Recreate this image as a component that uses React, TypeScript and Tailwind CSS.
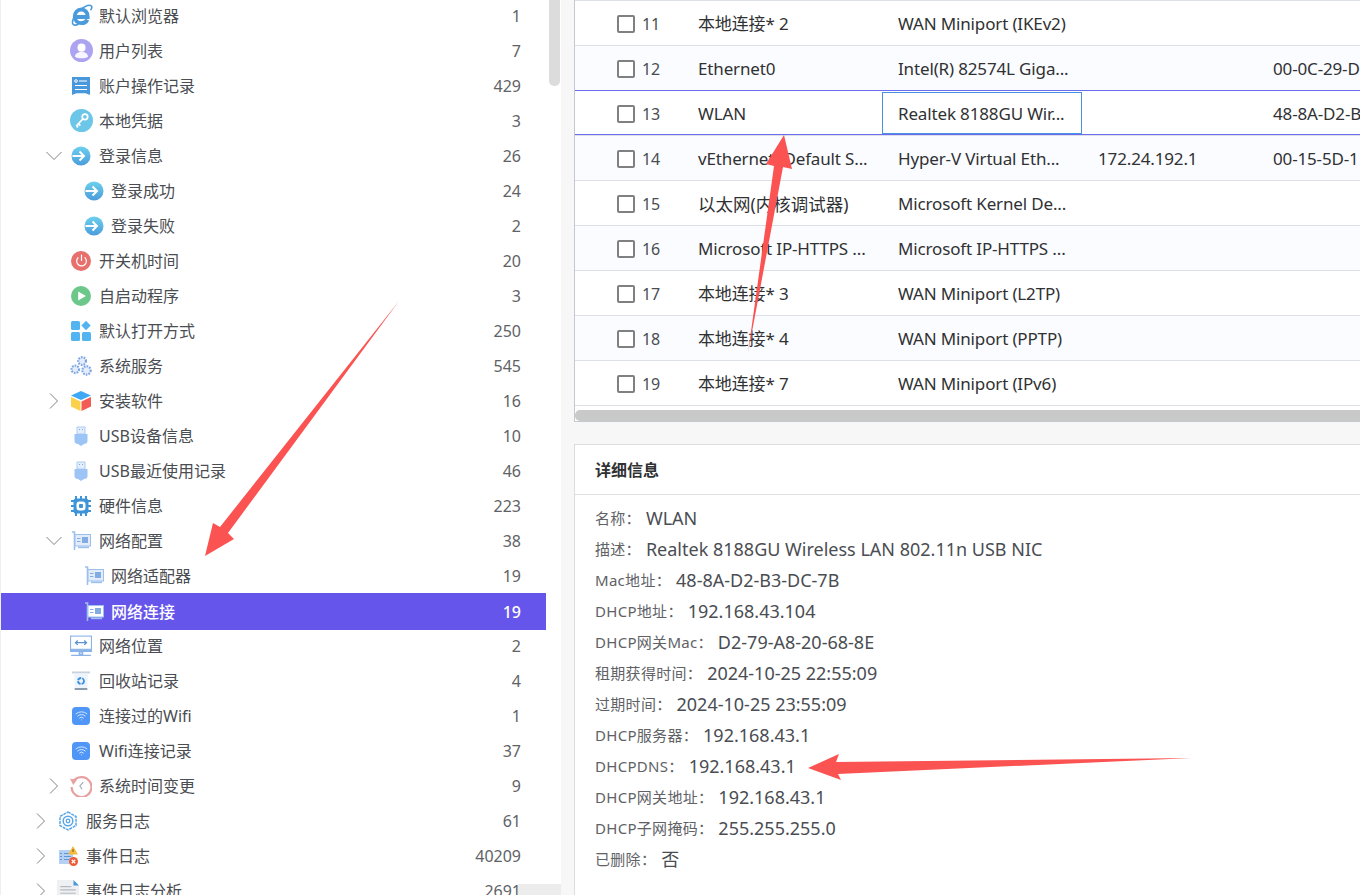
import { ReactNode } from "react";
import { Power, Wifi } from "lucide-react";

const font = { fontFamily: '"Noto Sans", "Noto Sans CJK SC", sans-serif' };

// icons, drawn on a 20x20 box unless a size is passed
const Svg = ({ children, size = 20 }: { children: ReactNode; size?: number }) => (
  <svg className="shrink-0" width={size} height={size} viewBox="0 0 20 20" fill="none">
    {children}
  </svg>
);

const IeIcon = () => (
  <Svg size={24}>
    <path d="M5 10.800h10.600c.2-3.600-2.200-6.200-5.300-6.200-3.200 0-5.500 2.500-5.500 5.800 0 3.300 2.400 5.600 5.500 5.600 2.400 0 4.200-1.200 5-3" stroke="#4a9bdc" strokeWidth="3.200" />
    <path d="M3.500 17c-2-2 1.500-9 5.500-12 4-3 8-4.500 9.500-3.500 1 .8.300 2.500-.5 3.700M3.500 17c1 1 3 .5 4.500-.3" stroke="#4a9bdc" strokeWidth="1.300" />
  </Svg>
);
const UserIcon = () => (
  <Svg size={23}>
    <circle cx="10" cy="10" r="10" fill="#aca3f1" />
    <circle cx="10" cy="7.500" r="3.500" fill="#fff" />
    <path d="M4.300 15.500c0-2.800 2.500-4.200 5.700-4.200s5.700 1.400 5.700 4.200c-1.500 1-3.600 1.300-5.700 1.300s-4.200-.3-5.700-1.300z" fill="#fff" fillOpacity=".9" />
  </Svg>
);
const RecordIcon = () => (
  <Svg>
    <path d="M1 1h18v18l-4.500-1.800H5.500L1 19z" fill="#4a98dc" />
    <circle cx="5" cy="5" r="1.300" stroke="#fff" />
    <path d="M8 5h8M4 9.500h12M4 13.500h12" stroke="#fff" strokeWidth="1.200" />
  </Svg>
);
const KeyIcon = () => (
  <Svg size={23}>
    <circle cx="10" cy="10" r="10" fill="#6cc6e8" />
    <circle cx="13" cy="6.800" r="2.400" stroke="#fff" strokeWidth="1.500" />
    <path d="M11.300 8.500 5.500 14.800M7.300 12.800l1.700 1.700M5.700 14.600l1.300 1.300" stroke="#fff" strokeWidth="1.500" />
  </Svg>
);
const LoginIcon = ({ id }: { id: string }) => (
  <Svg>
    <defs>
      <linearGradient id={id} x1="0" y1="0" x2="0" y2="1">
        <stop offset="0" stopColor="#6dd0ee" />
        <stop offset="1" stopColor="#4b9cdb" />
      </linearGradient>
    </defs>
    <circle cx="10" cy="10" r="9.500" fill={`url(#${id})`} />
    <path d="M1.500 10h11M8.500 5.500 13 10l-4.500 4.500" stroke="#fff" strokeWidth="2" />
  </Svg>
);
const PowerIcon = () => (
  <span className="flex h-5 w-5 items-center justify-center rounded-full bg-[#e8706c]">
    <Power size={13} color="#fff" strokeWidth={2.200} />
  </span>
);
const PlayIcon = () => (
  <Svg>
    <circle cx="10" cy="10" r="10" fill="#6cc88a" />
    <path d="M7.200 5.500 15 10l-7.800 4.500z" fill="#fff" />
  </Svg>
);
const AppsIcon = () => (
  <Svg>
    <rect x="0" y="0" width="9" height="9" rx="1.500" fill="#52b4f0" />
    <rect x="0" y="11" width="9" height="9" rx="1.500" fill="#52b4f0" />
    <rect x="11" y="11" width="9" height="9" rx="1.500" fill="#52b4f0" />
    <path d="m15 -.2 4.700 4.700-4.700 4.700-4.700-4.700z" fill="#52b4f0" />
  </Svg>
);
const GearsIcon = () => (
  <Svg size={22}>
    <g stroke="#7da5e4" fill="#e4edfb">
      <circle cx="11" cy="5.500" r="3.500" strokeWidth="2" strokeDasharray="1.500 1" />
      <circle cx="4.800" cy="13" r="3.400" strokeWidth="2" strokeDasharray="1.500 1" />
      <circle cx="15" cy="14" r="3.800" strokeWidth="2" strokeDasharray="1.500 1" />
    </g>
  </Svg>
);
const CubeIcon = () => (
  <Svg>
    <path d="M10 0 20 4.500 10 9 0 4.500z" fill="#3fa9f5" />
    <path d="M0 6v9.500L9.500 20V10.500z" fill="#fbd14b" />
    <path d="M20 6v9.500L10.500 20V10.500z" fill="#f25c54" />
  </Svg>
);
const UsbIcon = () => (
  <Svg>
    <path d="M6 1h8v7H6z" fill="#e4eefb" stroke="#a9cbf5" />
    <path d="M8 3.500h1M11 3.500h1" stroke="#7fa9de" strokeWidth="1.200" />
    <path d="M3.500 8h13v7c0 1.800-1.500 3-3.500 3l-3 2-3-2c-2 0-3.500-1.200-3.500-3z" fill="#9cc4f5" />
  </Svg>
);
const ChipIcon = () => (
  <Svg>
    <path d="M5 0v20M10 0v20M15 0v20M0 5h20M0 10h20M0 15h20" stroke="#3f94d8" strokeWidth="2" />
    <rect x="2.500" y="2.500" width="15" height="15" rx="2.500" fill="#3f94d8" />
    <rect x="5.500" y="5.500" width="9" height="9" rx="3" fill="#fff" />
    <rect x="8" y="8" width="4" height="4" rx="1" fill="#3f94d8" />
  </Svg>
);
const NicIcon = ({ light }: { light?: boolean }) => (
  <Svg>
    <path d="M1 1h2.500v18" stroke="#9cc0ec" strokeWidth="1.600" />
    <rect x="4" y="3.500" width="15.500" height="11.500" fill={light ? "#fff" : "#e2ecfb"} stroke="#9cc0ec" />
    <rect x="11" y="6" width="6" height="6" fill="#82ace2" />
    <path d="M6 7.500h3.500M6 10.500h3.500" stroke="#82ace2" />
    <path d="M7 15.500h11v1.700H7z" fill="#9cc0ec" />
  </Svg>
);
const MonitorIcon = () => (
  <Svg size={22}>
    <rect x="0.500" y="1" width="19" height="12" fill="#fff" stroke="#8ab4e8" />
    <rect x="0" y="13" width="20" height="2.500" fill="#8ab4e8" />
    <path d="M5 7h10M7 5 5 7l2 2M13 5l2 2-2 2" stroke="#5b93d8" strokeWidth="1.200" />
    <path d="M8.500 15.500h3v2h-3zM1 18.500h18" stroke="#8ab4e8" strokeWidth="1.200" />
  </Svg>
);
const BinIcon = () => (
  <Svg>
    <path d="M1 .5h18v2H1z" fill="#c9d2dc" />
    <path d="M3 2.500h14l-.8 15H3.800z" fill="#eef4fb" />
    <path d="M3.700 17h12.600v2H3.700z" fill="#8c9bab" />
    <circle cx="10" cy="10" r="3" stroke="#3d8fe0" strokeWidth="1.800" strokeDasharray="4 1" />
  </Svg>
);
const WifiIcon = () => (
  <span className="flex h-[18px] w-[18px] items-center justify-center rounded-[4px] bg-[#5096f7]">
    <Wifi size={13} color="#d8e8ff" strokeWidth={1.800} />
  </span>
);
const HistoryIcon = () => (
  <Svg size={22}>
    <path d="M3 6a9 9 0 1 1-1.500 5" stroke="#e8a0a0" strokeWidth="2" />
    <path d="M0 3.500 6.500 4 3 9z" fill="#e8a0a0" />
    <path d="M12 6.500 9 10l2 3" stroke="#9aa6b8" strokeWidth="1" />
  </Svg>
);
const ServiceIcon = () => (
  <Svg>
    <path d="M10 1 18 5.500v9L10 19 2 14.500v-9z" stroke="#5aa5e6" strokeWidth="1.500" strokeDasharray="3 .8" />
    <circle cx="10" cy="10" r="4.800" stroke="#5aa5e6" strokeWidth="1.500" />
    <circle cx="10" cy="10" r="1.800" stroke="#5aa5e6" strokeWidth="1.300" />
  </Svg>
);
const EventIcon = () => (
  <Svg>
    <rect x="1" y="4" width="14" height="14" fill="#b4d0f2" />
    <path d="M2 7.500h2M6 7.500h7M2 10.500h2M6 10.500h7M2 13.500h2M6 13.500h5" stroke="#5d95d8" />
    <path d="m15 0 5 8.500H10z" fill="#f5bb3c" />
    <path d="M15 3v3" stroke="#7a5a10" />
    <circle cx="15.500" cy="15.500" r="4.500" fill="#ee5a35" />
    <path d="m13.800 13.800 3.400 3.400m0-3.400-3.400 3.400" stroke="#fff" strokeWidth="1.300" />
  </Svg>
);
const DocIcon = () => (
  <Svg size={22}>
    <path d="M0 0h15l5 5v15H0z" fill="#eef0f2" />
    <path d="M15 0l5 5h-5z" fill="#4a98dc" />
    <path d="M3 6h10M3 9h14M3 12h14" stroke="#b4bac2" />
    <circle cx="11" cy="19" r="5" fill="#4a98dc" />
  </Svg>
);

const ArrowOpen = () => (
  <svg width="16" height="10" viewBox="0 0 16 10" fill="none">
    <path d="M.5 1 8 8.500 15.500 1" stroke="#808285" />
  </svg>
);
const ArrowClosed = () => (
  <svg width="10" height="16" viewBox="0 0 10 16" fill="none">
    <path d="M1 .5 8.500 8 1 15.500" stroke="#808285" />
  </svg>
);

type TreeRow = {
  label: string;
  count: number;
  depth: 1 | 2 | 3;
  icon: ReactNode;
  arrow?: "open" | "closed";
  active?: boolean;
};

const treeRows: TreeRow[] = [
  { label: "默认浏览器", count: 1, depth: 2, icon: <IeIcon /> },
  { label: "用户列表", count: 7, depth: 2, icon: <UserIcon /> },
  { label: "账户操作记录", count: 429, depth: 2, icon: <RecordIcon /> },
  { label: "本地凭据", count: 3, depth: 2, icon: <KeyIcon /> },
  { label: "登录信息", count: 26, depth: 2, icon: <LoginIcon id="lg1" />, arrow: "open" },
  { label: "登录成功", count: 24, depth: 3, icon: <LoginIcon id="lg2" /> },
  { label: "登录失败", count: 2, depth: 3, icon: <LoginIcon id="lg3" /> },
  { label: "开关机时间", count: 20, depth: 2, icon: <PowerIcon /> },
  { label: "自启动程序", count: 3, depth: 2, icon: <PlayIcon /> },
  { label: "默认打开方式", count: 250, depth: 2, icon: <AppsIcon /> },
  { label: "系统服务", count: 545, depth: 2, icon: <GearsIcon /> },
  { label: "安装软件", count: 16, depth: 2, icon: <CubeIcon />, arrow: "closed" },
  { label: "USB设备信息", count: 10, depth: 2, icon: <UsbIcon /> },
  { label: "USB最近使用记录", count: 46, depth: 2, icon: <UsbIcon /> },
  { label: "硬件信息", count: 223, depth: 2, icon: <ChipIcon /> },
  { label: "网络配置", count: 38, depth: 2, icon: <NicIcon />, arrow: "open" },
  { label: "网络适配器", count: 19, depth: 3, icon: <NicIcon /> },
  { label: "网络连接", count: 19, depth: 3, icon: <NicIcon light />, active: true },
  { label: "网络位置", count: 2, depth: 2, icon: <MonitorIcon /> },
  { label: "回收站记录", count: 4, depth: 2, icon: <BinIcon /> },
  { label: "连接过的Wifi", count: 1, depth: 2, icon: <WifiIcon /> },
  { label: "Wifi连接记录", count: 37, depth: 2, icon: <WifiIcon /> },
  { label: "系统时间变更", count: 9, depth: 2, icon: <HistoryIcon />, arrow: "closed" },
  { label: "服务日志", count: 61, depth: 1, icon: <ServiceIcon />, arrow: "closed" },
  { label: "事件日志", count: 40209, depth: 1, icon: <EventIcon />, arrow: "closed" },
  { label: "事件日志分析", count: 2691, depth: 1, icon: <DocIcon />, arrow: "closed" },
];

const netRows = [
  { no: 11, name: "本地连接* 2", adapter: "WAN Miniport (IKEv2)", ip: "", mac: "" },
  { no: 12, name: "Ethernet0", adapter: "Intel(R) 82574L Giga...", ip: "", mac: "00-0C-29-D" },
  { no: 13, name: "WLAN", adapter: "Realtek 8188GU Wir...", ip: "", mac: "48-8A-D2-B" },
  { no: 14, name: "vEthernet (Default S...", adapter: "Hyper-V Virtual Eth...", ip: "172.24.192.1", mac: "00-15-5D-1" },
  { no: 15, name: "以太网(内核调试器)", wide: true, adapter: "Microsoft Kernel De...", ip: "", mac: "" },
  { no: 16, name: "Microsoft IP-HTTPS ...", adapter: "Microsoft IP-HTTPS ...", ip: "", mac: "" },
  { no: 17, name: "本地连接* 3", adapter: "WAN Miniport (L2TP)", ip: "", mac: "" },
  { no: 18, name: "本地连接* 4", adapter: "WAN Miniport (PPTP)", ip: "", mac: "" },
  { no: 19, name: "本地连接* 7", adapter: "WAN Miniport (IPv6)", ip: "", mac: "" },
];

const details = [
  ["名称", "WLAN"],
  ["描述", "Realtek 8188GU Wireless LAN 802.11n USB NIC"],
  ["Mac地址", "48-8A-D2-B3-DC-7B"],
  ["DHCP地址", "192.168.43.104"],
  ["DHCP网关Mac", "D2-79-A8-20-68-8E"],
  ["租期获得时间", "2024-10-25 22:55:09"],
  ["过期时间", "2024-10-25 23:55:09"],
  ["DHCP服务器", "192.168.43.1"],
  ["DHCPDNS", "192.168.43.1"],
  ["DHCP网关地址", "192.168.43.1"],
  ["DHCP子网掩码", "255.255.255.0"],
  ["已删除", "否"],
];

function TreeItem({ row }: { row: TreeRow }) {
  const indent = row.depth === 1 ? "pl-[29px]" : row.depth === 2 ? "pl-[42px]" : "pl-[55px]";
  const gap = row.depth === 3 ? "mr-[7px]" : "mr-2";
  return (
    <div
      className={`flex items-center pr-[25px] text-[16px] ${indent} ${
        row.active ? "-mb-[2px] h-[37px] bg-[#6655eb] font-medium text-white" : "h-[35px] text-[#4a4d52]"
      }`}
    >
      <span className="flex w-[22px] justify-center">
        {row.arrow === "open" && <ArrowOpen />}
        {row.arrow === "closed" && <ArrowClosed />}
      </span>
      <span className={`ml-[6px] flex w-5 justify-center ${gap}`}>{row.icon}</span>
      <span className="flex-1 whitespace-nowrap">{row.label}</span>
      <span className={row.active ? "" : "text-[#606266]"}>{row.count}</span>
    </div>
  );
}

export default function App() {
  return (
    <div style={font} className="relative flex h-[895px] w-[1360px] overflow-hidden bg-[#f7f7f7]">
      {/* Árbol lateral */}
      <div className="relative flex w-[561px] shrink-0 border-l border-[#efefef] bg-white">
        <div className="-mt-[2px] w-[545px] shrink-0">
          {treeRows.map((row) => (
            <TreeItem key={row.label} row={row} />
          ))}
        </div>
        <div className="ml-[3px] w-[11px]">
          <div className="h-[86px] rounded-b-[5px] bg-[#dcdcdc]" />
        </div>
        <div className="absolute bottom-0 right-0 h-[11px] w-[43px] bg-[#ececec]" />
      </div>

      <div className="ml-[13px] flex min-w-0 flex-1 flex-col">
        {/* Tabla de conexiones */}
        <div className="h-[422px] shrink-0 overflow-hidden border-b border-l border-[#c4c8cf] bg-white">
          <div className="border-t border-[#dcdfe6]">
            {netRows.map((r) => {
              const selected = r.no === 13;
              const lineColor = r.no === 12 ? "border-[#6a6cf0]" : "border-[#dcdfe6]";
              return (
                <div
                  key={r.no}
                  className={`flex h-[45px] border-b text-[17px] tracking-[-0.15px] text-[#303133] ${lineColor} ${
                    selected ? "shadow-[inset_0_-1px_0_#6a6cf0]" : r.no % 2 === 0 ? "bg-[#fbfcff]" : "bg-white"
                  }`}
                >
                  <div className="flex w-[107px] shrink-0 items-center gap-[7px] pl-[42px] pt-[2px] text-[16px] text-[#4a4d52]">
                    <span className="h-[18px] w-[18px] rounded-[2px] border-2 border-[#808080] bg-white" />
                    {r.no}
                  </div>
                  <div
                    className={`flex w-[200px] shrink-0 items-center whitespace-nowrap px-4 pt-[2px] ${
                      r.wide ? "text-[17.5px] tracking-normal" : ""
                    }`}
                  >
                    {r.name}
                  </div>
                  <div
                    className={`flex w-[200px] shrink-0 items-center whitespace-nowrap pt-[2px] ${
                      selected ? "my-px border border-[#4a90e2] pl-[15px]" : "pl-4"
                    }`}
                  >
                    {r.adapter}
                  </div>
                  <div className="flex w-[175px] shrink-0 items-center whitespace-nowrap px-4 pt-[2px]">{r.ip}</div>
                  <div className="flex flex-1 items-center whitespace-nowrap pl-4 pt-[2px]">{r.mac}</div>
                </div>
              );
            })}
          </div>
          <div className="mt-[4px] h-[11px] rounded-l-[5px] bg-[#c9c9c9]" />
        </div>

        {/* Detalle */}
        <div className="mt-[22px] flex-1 border-l border-t border-[#dcdcdc] bg-white">
          <div className="flex h-[50px] items-center border-b border-[#e0e0e0] pl-5 text-[16px] font-bold text-[#303133]">
            详细信息
          </div>
          <div className="pl-5 pt-[8px]">
            {details.map(([label, value]) => (
              <div key={label} className="flex h-[31px] items-center whitespace-nowrap">
                <span className="text-[15px] tracking-[0.3px] text-[#606266]">{label}：</span>
                <span className="ml-[5px] text-[18px] text-[#4a4d52]">{value}</span>
              </div>
            ))}
          </div>
        </div>
      </div>

      {/* Flechas de anotación sobre la captura */}
      <svg className="pointer-events-none absolute left-0 top-0" width="1360" height="895">
        <polygon points="399,301 228,533 234,539 205,556 213,523 220,527" fill="#fb5252" />
        <polygon points="748,353 774,166 766,164 784,135 792,169 783,167" fill="#fb5252" />
        <polygon points="808,768 839,754 836,762 1192,758 838,774 841,780" fill="#fb5252" />
      </svg>
    </div>
  );
}
